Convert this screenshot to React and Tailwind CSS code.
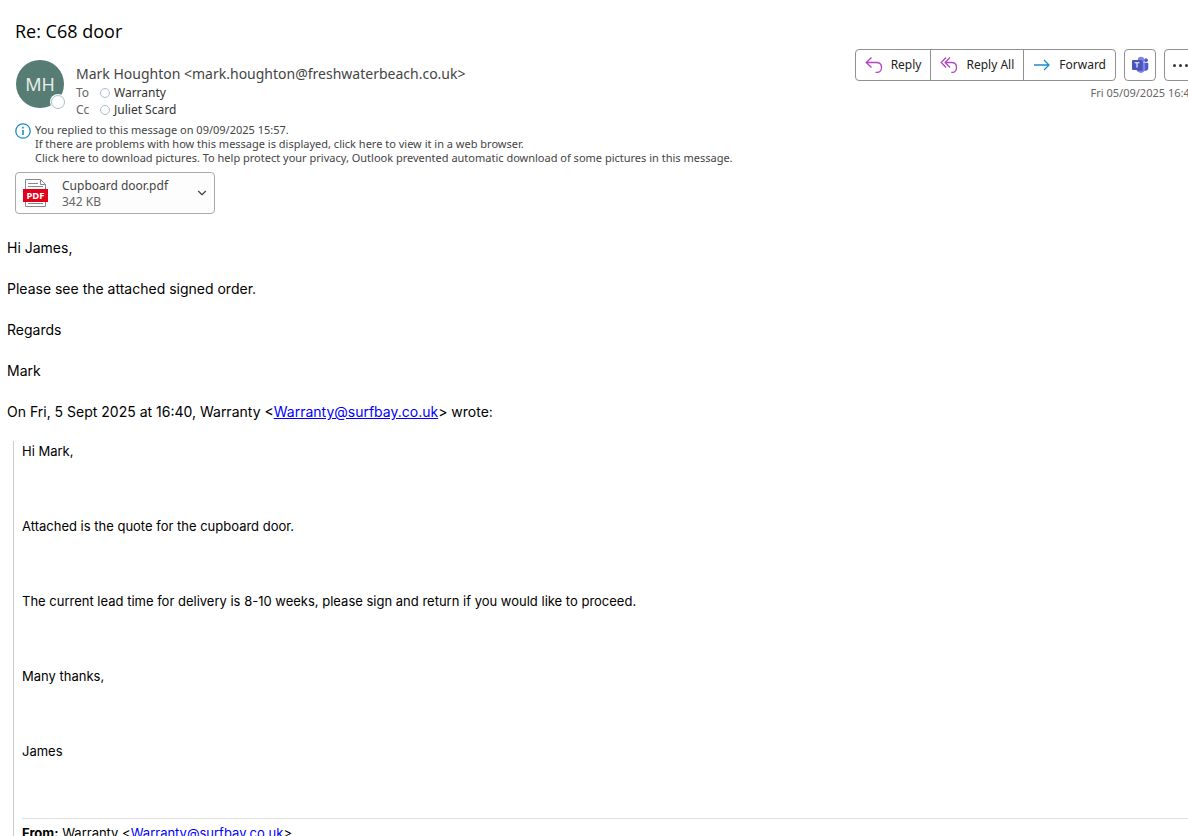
import { ChevronDown } from 'lucide-react'

const notices = [
  'You replied to this message on 09/09/2025 15:57.',
  'If there are problems with how this message is displayed, click here to view it in a web browser.',
  'Click here to download pictures. To help protect your privacy, Outlook prevented automatic download of some pictures in this message.',
]

const message = ['Hi James,', 'Please see the attached signed order.', 'Regards', 'Mark']

const quoted = [
  'Hi Mark,',
  'Attached is the quote for the cupboard door.',
  'The current lead time for delivery is 8-10 weeks, please sign and return if you would like to proceed.',
  'Many thanks,',
  'James',
]

const recipients = [
  { label: 'To', name: 'Warranty' },
  { label: 'Cc', name: 'Juliet Scard' },
]

function ReplyIcon() {
  return (
    <svg width="18" height="18" viewBox="0 0 18 18" fill="none" stroke="#b146c2" strokeWidth="1.3" aria-hidden="true">
      <path d="M6.5 1.5 1.2 6.5l5.3 5M1.5 6.5h9.8c3.2 0 5.2 2 5.2 4.9 0 2.9-1.9 5-4.5 5h-1.5" />
    </svg>
  )
}

function ReplyAllIcon() {
  return (
    <svg width="18" height="18" viewBox="0 0 18 18" fill="none" stroke="#b146c2" strokeWidth="1.3" aria-hidden="true">
      <path d="M6 1.5 1.2 6.5l4.8 5M10 1.5 5.2 6.5l4.8 5M5.5 6.5h6c3 0 5 2 5 4.9 0 2.9-1.7 5-4 5h-1.2" />
    </svg>
  )
}

function ForwardIcon() {
  return (
    <svg width="18" height="18" viewBox="0 0 18 18" fill="none" stroke="#1e8bcd" strokeWidth="1.3" aria-hidden="true">
      <path d="M1 9h15M11 4l5 5-5 5" />
    </svg>
  )
}

function TeamsIcon() {
  return (
    <svg width="18" height="18" viewBox="0 0 18 18" aria-hidden="true">
      <circle cx="15" cy="4.2" r="1.9" fill="#5059c9" />
      <path d="M12 6.8h4.3c.6 0 1 .4 1 1V12c0 1.6-1.2 2.8-2.7 2.8H12z" fill="#5059c9" />
      <circle cx="10" cy="4" r="3.2" fill="#7b83eb" />
      <path d="M5.5 6.8h8.6v5.5c0 2.8-1.9 4.7-4.3 4.7s-4.3-1.9-4.3-4.7z" fill="#7b83eb" />
      <path d="M5.8 5h5.8v9.6H5.8z" fill="#3f469f" />
      <rect x="1" y="4" width="10" height="10" rx="1" fill="#4b53bc" />
      <path d="M3.6 6.8h4.8M6 6.8v4.6" stroke="#fff" strokeWidth="1.1" />
    </svg>
  )
}

function PdfIcon() {
  return (
    <svg width="26" height="30" viewBox="0 0 26 30" aria-hidden="true">
      <path d="M2.5 1.5h15l5 5v22h-20z" fill="#fff" stroke="#8a8a8a" />
      <path d="M17.5 1.5v5h5M5 5.5h10M5 8.5h15M5 25.5h15" fill="none" stroke="#8a8a8a" />
      <rect x="0" y="11" width="25" height="13" fill="#e3001b" />
      <text x="12.5" y="21" textAnchor="middle" fontSize="9.5" fontWeight="700" fill="#fff">PDF</text>
    </svg>
  )
}

function InfoIcon() {
  return (
    <svg width="16" height="16" viewBox="0 0 16 16" fill="none" stroke="#1e8bcd" aria-hidden="true">
      <circle cx="8" cy="8" r="7.2" strokeWidth="1.3" />
      <path d="M8 3.8v1.8M8 7v5" strokeWidth="1.6" />
    </svg>
  )
}

function App() {
  return (
    <div className="h-screen overflow-hidden bg-white text-black font-['Noto_Sans',sans-serif]">
      <header className="pl-[15px] pt-[18px]">
        <h1 className="text-lg leading-[26px] font-['Open_Sans',sans-serif]">Re: C68 door</h1>

        <div className="flex justify-between">
          <div className="flex gap-3 pt-4">
            <div className="relative ml-px flex size-12 shrink-0 items-center justify-center rounded-full bg-[#567c73] text-lg text-[#e6eeec]">
              MH
              <span className="absolute -right-px -bottom-px size-[14px] rounded-full border border-[#a5c0ca] bg-white ring-1 ring-white" />
            </div>
            <div className="text-[#444]">
              <p className="pt-1 text-sm leading-5">Mark Houghton &lt;mark.houghton@freshwaterbeach.co.uk&gt;</p>
              {recipients.map(r => (
                <div key={r.label} className="flex items-center text-xs leading-[17px]">
                  <span className="w-6 text-[#666]">{r.label}</span>
                  <span className="mr-1 size-[10px] rounded-full border border-[#a5c0ca]" />
                  <span className="text-[#333]">{r.name}</span>
                </div>
              ))}
            </div>
          </div>

          <div className="pt-[5px]">
            <div className="-mr-2 flex h-8 justify-end gap-2 text-xs text-[#222]">
              <div className="flex divide-x divide-[#919191] rounded-sm border border-[#919191]">
                <button className="flex items-center gap-2 px-[9px]"><ReplyIcon />Reply</button>
                <button className="flex items-center gap-2 px-[9px]"><ReplyAllIcon />Reply All</button>
                <button className="flex items-center gap-2 px-[9px]"><ForwardIcon />Forward</button>
              </div>
              <button aria-label="Share to Teams" className="flex w-8 items-center justify-center rounded-sm border border-[#919191]"><TeamsIcon /></button>
              <button aria-label="More actions" className="flex w-8 items-center justify-center gap-[3px] rounded-sm border border-[#919191]">
                <span className="size-[3px] rounded-full bg-[#333]" />
                <span className="size-[3px] rounded-full bg-[#333]" />
                <span className="size-[3px] rounded-full bg-[#333]" />
              </button>
            </div>
            <p className="-mr-2 pt-[3px] text-right text-[11px] leading-[18px] whitespace-nowrap text-[#666]">Fri 05/09/2025 16:40</p>
          </div>
        </div>

        <div className="flex gap-1 pt-[5px] text-[11px] leading-[14px] text-[#444]">
          <InfoIcon />
          <div>
            {notices.map(n => <p key={n}>{n}</p>)}
          </div>
        </div>

        <button className="mt-[7px] flex h-[42px] w-[200px] items-center rounded-sm border border-[#aaa] bg-[#fdfdfd] pr-[5px] pl-[7px] text-left text-xs leading-4">
          <PdfIcon />
          <span className="ml-[13px] flex-1 pt-px text-[#444]">
            Cupboard door.pdf
            <span className="block text-[#666]">342 KB</span>
          </span>
          <ChevronDown size={14} color="#444" />
        </button>
      </header>

      <main className="font-['Inter',sans-serif]">
        <div className="space-y-[21px] px-[7px] pt-6 text-sm leading-5">
          {message.map(line => <p key={line}>{line}</p>)}
          <p>
            On Fri, 5 Sept 2025 at 16:40, Warranty &lt;<a href="mailto:Warranty@surfbay.co.uk" className="text-[#0000ff] underline">Warranty@surfbay.co.uk</a>&gt; wrote:
          </p>
        </div>

        <blockquote className="mt-[19px] ml-[13px] border-l border-[#ccc] pl-2 text-[13px] leading-5">
          <div className="space-y-[55px]">
            {quoted.map(line => <p key={line}>{line}</p>)}
          </div>
          <div className="mt-[57px] border-t border-[#e1e1e1] pt-1">
            <p>
              <b>From:</b> Warranty &lt;<a href="mailto:Warranty@surfbay.co.uk" className="text-[#0000ff] underline">Warranty@surfbay.co.uk</a>&gt;
            </p>
          </div>
        </blockquote>
      </main>
    </div>
  )
}

export default App
